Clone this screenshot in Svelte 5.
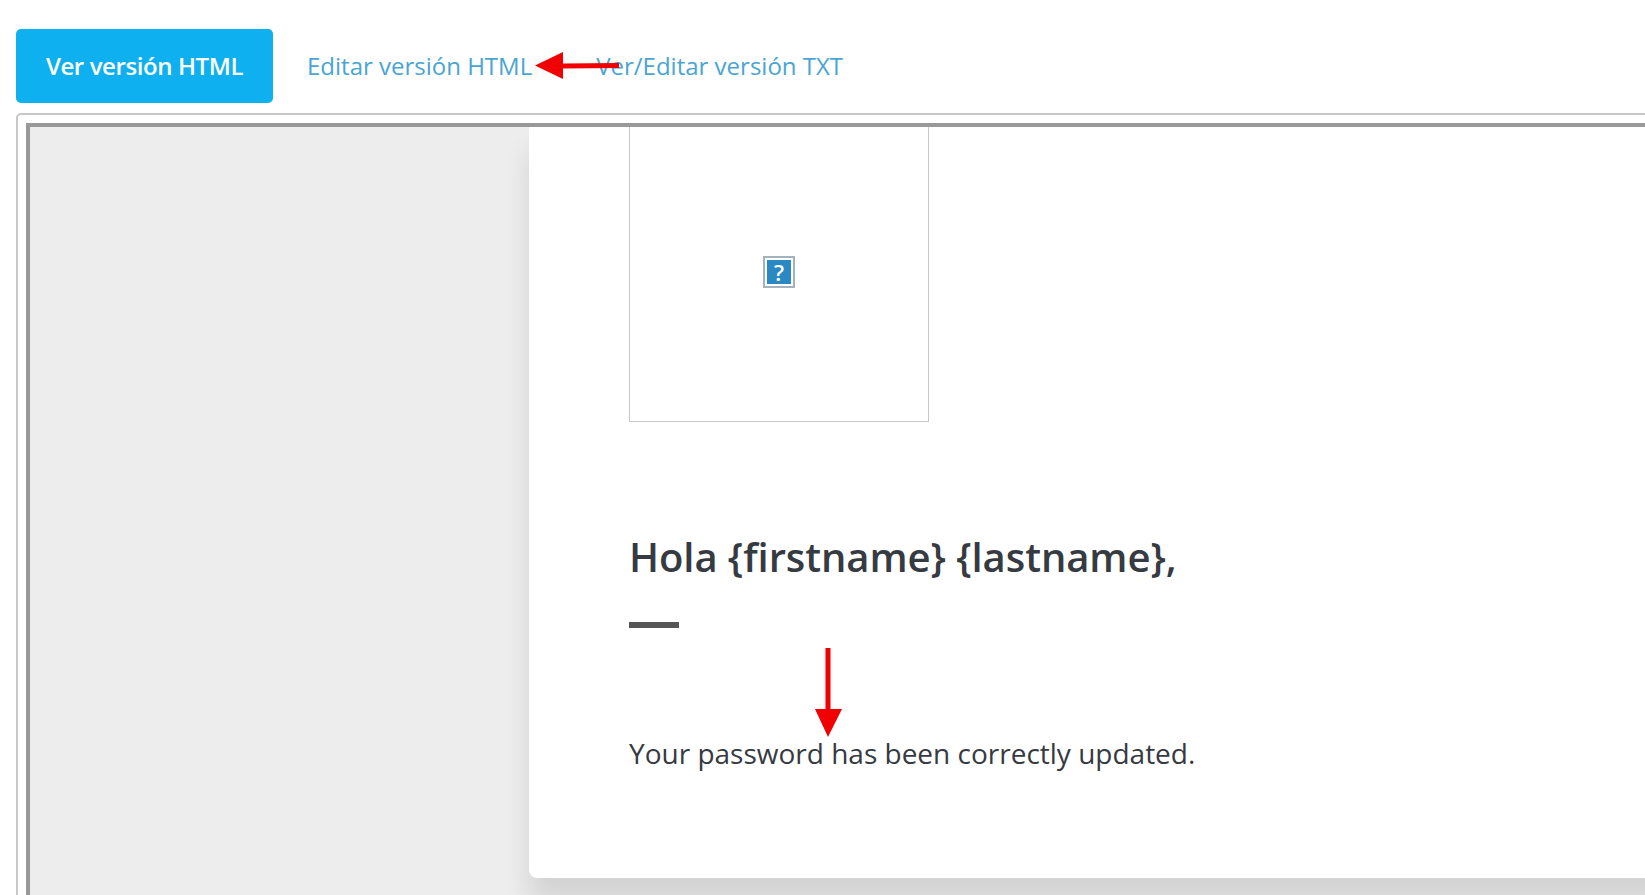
<script>
  let tabs = ["Editar versión HTML", "Ver/Editar versión TXT"];
</script>

<div class="page">
  <nav class="toolbar">
    <button class="primary">Ver versión HTML</button>
    {#each tabs as tab}
      <a href="#top">{tab}</a>
    {/each}
  </nav>

  <div class="panel">
    <div class="frame">
      <div class="card">
        <div class="picture">
          <span class="broken">
            <span>?</span>
          </span>
        </div>
        <h1>Hola {"{firstname}"} {"{lastname}"},</h1>
        <div class="rule"></div>
        <p>Your password has been correctly updated.</p>
      </div>
    </div>
  </div>

  <svg class="arrow" viewBox="0 0 1645 895" aria-hidden="true">
    <path d="M619 63 L563 63.5 L563 52 L535 65.5 L563 79 L563 68.5 L619 68 Z" fill="#f00000" />
    <path d="M825.5 648 H830.5 V709 H842 L828 737 L815 709 H825.5 Z" fill="#f00000" />
  </svg>
</div>

<style>
  :global(body) {
    background: #fff;
  }

  .page {
    position: relative;
    width: 1645px;
    height: 895px;
    overflow: hidden;
    font-family: "Open Sans", sans-serif;
    box-sizing: border-box;
    padding: 29px 0 0 16px;
  }

  .toolbar {
    display: flex;
    align-items: center;
    height: 74px;
    gap: 34px;
  }

  .primary {
    width: 257px;
    height: 74px;
    border: 0;
    border-radius: 5px;
    background: #0fb0f0;
    color: #fff;
    font: 600 24px "Open Sans", sans-serif;
    letter-spacing: -0.4px;
    padding: 0 0 2px;
  }

  a {
    color: #4aa5d3;
    font-size: 24px;
    text-decoration: none;
    padding-bottom: 2px;
  }

  a + a {
    margin-left: 30px;
  }

  .panel {
    margin-top: 10px;
    height: 800px;
    width: 1700px;
    border: 2px solid #c8c8c8;
    border-radius: 5px 0 0 0;
    padding: 8px 0 0 8px;
    box-sizing: border-box;
  }

  .frame {
    height: 800px;
    border: 4px solid #999;
    border-width: 4px 0 0 4px;
    background: #ededed;
    padding-left: 499px;
    overflow: hidden;
  }

  .card {
    display: flow-root;
    height: 751px;
    background: #fff;
    border-radius: 0 0 0 8px;
    box-shadow: 0 24px 26px rgba(0, 0, 0, 0.11);
    padding-left: 100px;
  }

  .picture {
    width: 298px;
    height: 300px;
    margin-top: -7px;
    border: 1px solid #c9c9c9;
    display: flex;
    align-items: center;
    justify-content: center;
  }

  .broken {
    width: 32px;
    height: 32px;
    box-sizing: border-box;
    border: 2px solid #a3b3bd;
    padding: 2px;
    background: #fff;
    display: flex;
    transform: translateY(1px);
  }

  .broken span {
    flex: 1;
    background: #2a88c2;
    color: #fff;
    font: 600 22px/24px "Open Sans", sans-serif;
    text-align: center;
  }

  h1 {
    margin: 0;
    padding-top: 109px;
    font-size: 40px;
    font-weight: 600;
    line-height: 52px;
    color: #363a41;
    letter-spacing: -0.07px;
  }

  .rule {
    width: 50px;
    height: 6px;
    margin-top: 39px;
    background: #555;
  }

  p {
    margin: 107px 0 0;
    font-size: 28px;
    line-height: 36px;
    color: #363a41;
  }

  .arrow {
    position: absolute;
    left: 0;
    top: 0;
    width: 1645px;
    height: 895px;
    pointer-events: none;
  }
</style>
